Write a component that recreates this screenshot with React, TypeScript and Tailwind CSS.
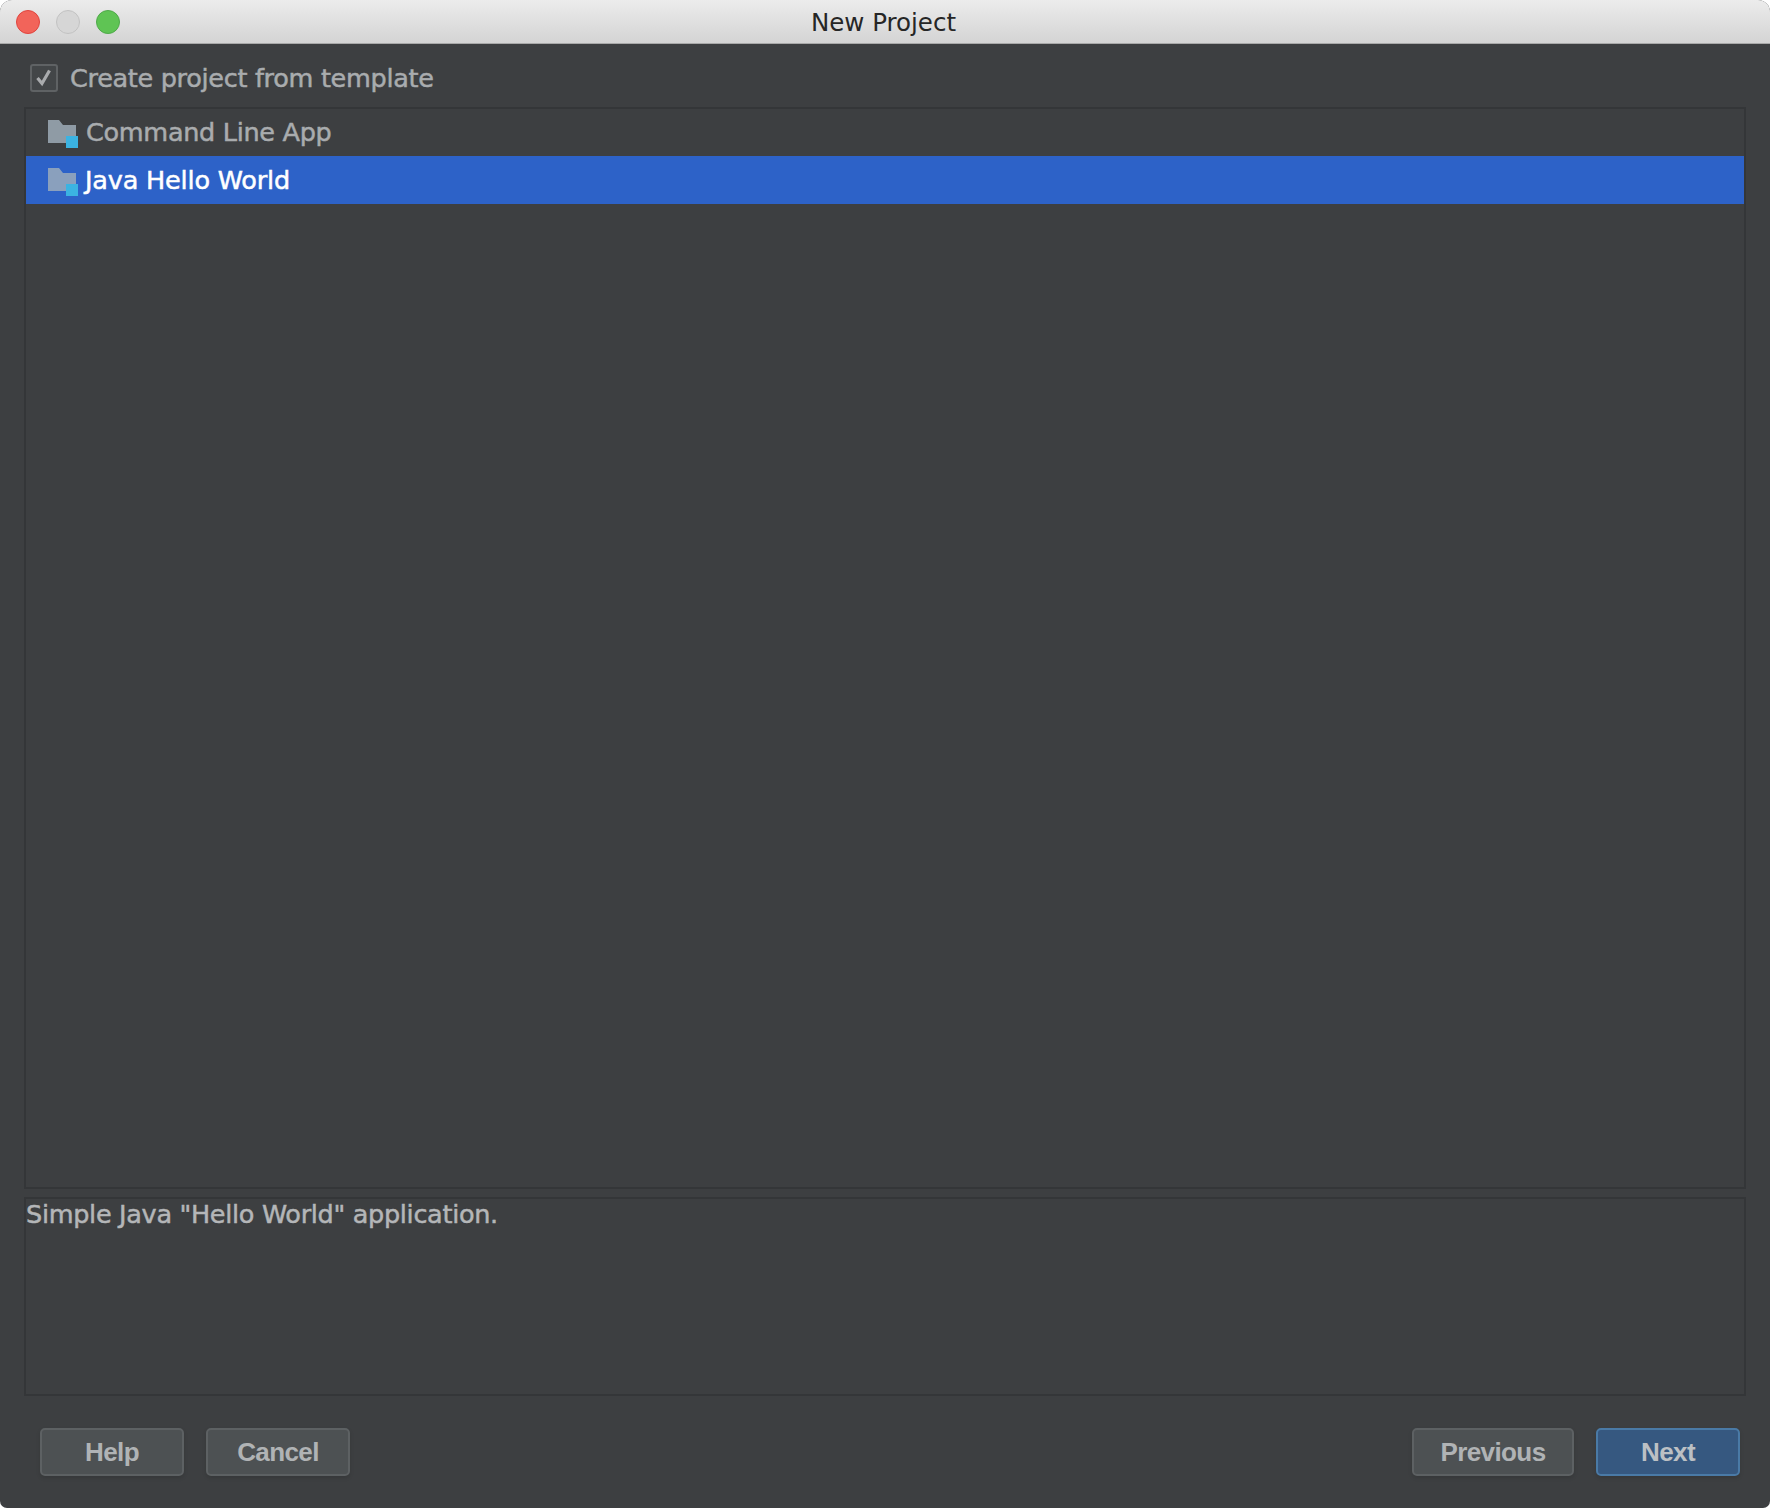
export default function App() {
  const Folder = ({ tone }: { tone: string }) => (
    <svg width="30" height="28" viewBox="0 0 30 28" className="mt-[3px] shrink-0">
      <path d="M0 0H11L15 5H28V23H0Z" fill={tone} />
      <rect x="18" y="16" width="12" height="12" fill="#3bb3e2" />
    </svg>
  );
  const btn = "flex h-[48px] items-center justify-center rounded-[5px] border-2 font-['Liberation_Sans',sans-serif] text-[26px] font-bold tracking-[-0.6px] shadow-[0_2px_4px_rgba(0,0,0,0.12)]";
  const label = "text-[25.5px] tracking-[-0.3px] [-webkit-text-stroke:0.5px]";
  return (
    <div className="flex h-[1508px] w-[1770px] flex-col overflow-hidden bg-white font-['DejaVu_Sans',sans-serif]">
      <div className="flex h-full flex-col overflow-hidden rounded-t-[12px] rounded-b-[7px] bg-[#3d3f41]">
        <div className="relative flex h-[44px] shrink-0 items-center justify-center border-b border-[#a9a9a9] bg-gradient-to-b from-[#ececec] to-[#d4d4d4]">
          <div className="absolute left-[16px] top-[10px] flex gap-[16px]">
            <div className="h-[24px] w-[24px] rounded-full border border-[#e0443e] bg-[#f2645a]" />
            <div className="h-[24px] w-[24px] rounded-full border border-[#c2c2c2] bg-[#d6d6d6]" />
            <div className="h-[24px] w-[24px] rounded-full border border-[#4fa94a] bg-[#5fc454]" />
          </div>
          <span className="mr-[3px] pt-[4px] text-[24.5px] leading-none text-[#262626]">New Project</span>
        </div>
        <div className="flex flex-1 flex-col pl-[24px] pr-[24px]">
          <div className="flex h-[63px] shrink-0 items-center pl-[6px] pt-[5px]">
            <div className="flex h-[28px] w-[28px] items-center justify-center rounded-[3px] border-2 border-[#5f6264] bg-[#434648]">
              <svg width="20" height="20" viewBox="0 0 20 20" fill="none">
                <path d="M3.5 10L8 15.5L15.5 2.5" stroke="#a9abad" strokeWidth="3.2" />
              </svg>
            </div>
            <span className={`ml-[12px] pt-[1px] leading-none text-[#a9acae] ${label}`}>Create project from template</span>
          </div>
          <div className="h-[1082px] shrink-0 border-2 border-[#343638]">
            <div className={`flex h-[47px] items-center gap-[8px] pl-[22px] text-[#a9acae] ${label}`}>
              <Folder tone="#8f9ba5" />
              <span>Command Line App</span>
            </div>
            <div className={`flex h-[48px] items-center gap-[7px] bg-[#2d62c8] pl-[22px] text-white ${label}`}>
              <Folder tone="#8aa0bd" />
              <span className="tracking-[-0.18px]">Java Hello World</span>
            </div>
          </div>
          <div className={`mt-[8px] h-[199px] shrink-0 border-2 border-[#343638] leading-[30px] text-[#b4b6b8] ${label}`}>
            Simple Java "Hello World" application.
          </div>
          <div className="flex items-start justify-between pl-[16px] pr-[6px] pt-[32px]">
            <div className="flex gap-[22px]">
              <div className={`${btn} w-[144px] border-[#5d6163] bg-[#4d5153] text-[#b0b3b5]`}>Help</div>
              <div className={`${btn} w-[144px] border-[#5d6163] bg-[#4d5153] text-[#b0b3b5]`}>Cancel</div>
            </div>
            <div className="flex gap-[22px]">
              <div className={`${btn} w-[162px] border-[#5d6163] bg-[#4d5153] text-[#b0b3b5]`}>Previous</div>
              <div className={`${btn} w-[144px] border-[#4a7aa6] bg-[#365880] text-[#bcc0c4]`}>Next</div>
            </div>
          </div>
        </div>
      </div>
    </div>
  );
}
